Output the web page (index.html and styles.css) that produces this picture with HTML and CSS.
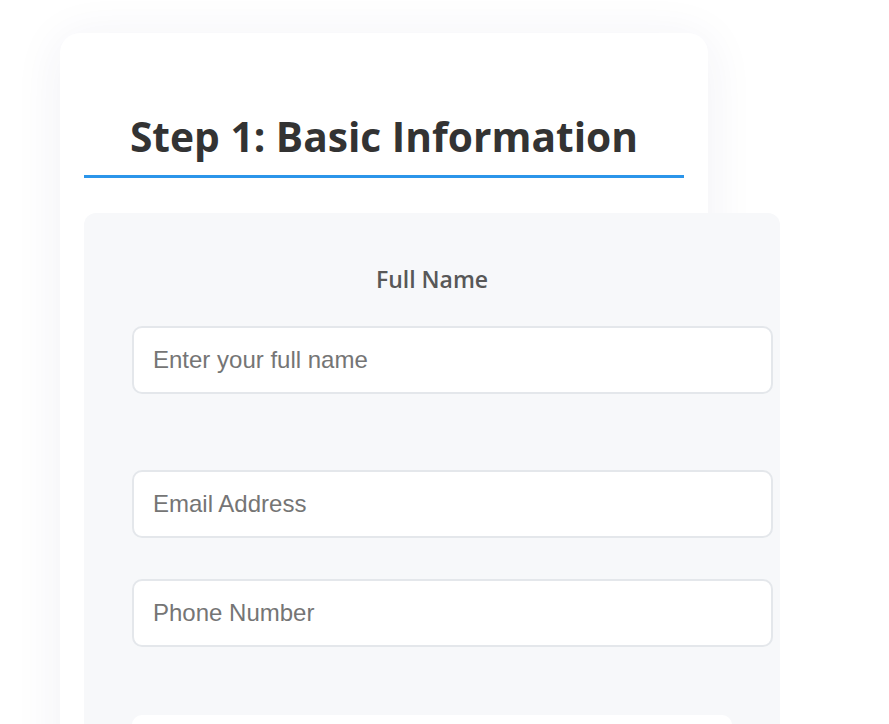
FILE: index.html
```html
<!DOCTYPE html>
<html lang="en">
<head>
<meta charset="utf-8">
<title>Step 1: Basic Information</title>
<link rel="stylesheet" href="styles.css">
</head>
<body>
  <div class="card">
    <h2 class="step-title">Step 1: Basic Information</h2>
    <form class="panel">
      <label class="field-label" for="fullname">Full Name</label>
      <input class="field field-first" id="fullname" type="text" placeholder="Enter your full name">
      <input class="field field-email" type="email" placeholder="Email Address">
      <input class="field field-phone" type="tel" placeholder="Phone Number">
      <div class="next-box"></div>
    </form>
  </div>
</body>
</html>
```

FILE: styles.css
```css
html, body {
  margin: 0;
  padding: 0;
  background: #ffffff;
}

body {
  padding: 33px 0 0 60px;
  height: 724px;
  overflow: hidden;
  box-sizing: border-box;
}

.card {
  width: 600px;
  padding: 24px 24px 60px;
  background: #ffffff;
  border-radius: 20px;
  box-shadow: 0 6px 50px rgba(40, 40, 110, 0.07);
  min-height: 800px;
}

.step-title {
  margin: 51px 0 0;
  padding: 0 0 11px;
  font-family: "Open Sans", "Noto Sans", sans-serif;
  font-weight: 700;
  font-size: 40.7px;
  line-height: normal;
  color: #333333;
  text-align: center;
  border-bottom: 3px solid #2b95ea;
}

.panel {
  width: 600px;
  margin-top: 35px;
  padding: 50px 48px 48px;
  background: #f7f8fa;
  border-radius: 12px;
}

.field-label {
  display: block;
  font-family: "Open Sans", "Noto Sans", sans-serif;
  font-weight: 600;
  font-size: 23px;
  line-height: 32px;
  color: #585858;
  text-align: center;
  margin-bottom: 31px;
}

.field {
  display: block;
  width: 100%;
  margin: 0;
  padding: 18px 18px 18px 19px;
  border: 2px solid #e4e7eb;
  border-radius: 10px;
  background: #ffffff;
  font-family: "Liberation Sans", Arial, sans-serif;
  font-size: 24px;
  color: #333333;
  outline: none;
}

.field::placeholder {
  color: #757575;
}

.field-email {
  margin-top: 76px;
}

.field-phone {
  margin-top: 41px;
}

.next-box {
  margin-top: 68px;
  width: 600px;
  height: 80px;
  background: #ffffff;
  border-radius: 10px;
}
```
